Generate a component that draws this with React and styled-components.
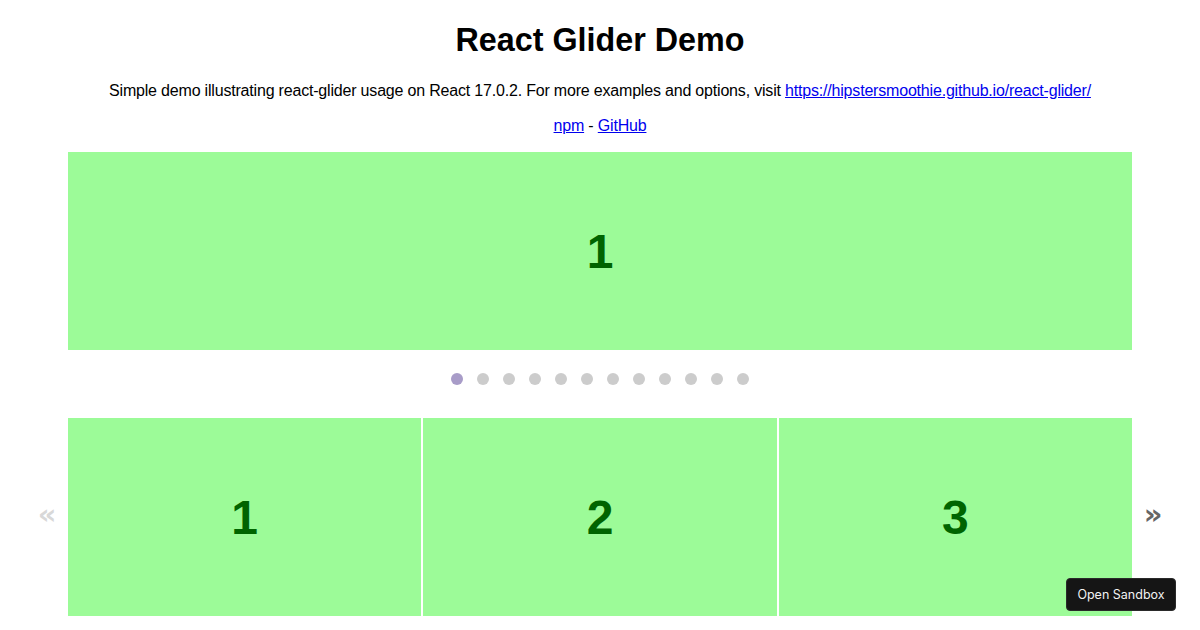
import React from "react";
import styled, { createGlobalStyle } from "styled-components";

const Global = createGlobalStyle`
  html, body { margin: 0; padding: 0; background: #fff; }
  body { font-family: "Liberation Sans", Arial, sans-serif; color: #000; }
  * { box-sizing: border-box; }
`;

const Page = styled.div`
  display: flex;
  flex-direction: column;
  align-items: center;
  padding-top: 22px;
`;

const Title = styled.h1`
  margin: 0;
  font-size: 32.3px;
  line-height: 37px;
  font-weight: bold;
`;

const Para = styled.p`
  margin: ${(p) => p.$top}px 0 0;
  font-size: 16px;
  line-height: 18px;
  letter-spacing: -0.19px;
  text-align: center;
`;

const Link = styled.a`
  color: #0000ee;
  text-decoration: underline;
`;

const Row = styled.div`
  display: flex;
  align-items: center;
  width: 1146px;
  margin-top: ${(p) => p.$top}px;
`;

const ArrowBox = styled.div`
  flex: 0 0 40px;
  display: flex;
  justify-content: center;
  align-items: center;
`;

const Arrow = styled.button`
  border: 0;
  background: none;
  padding: 0 0 6px;
  font-family: "DejaVu Sans", sans-serif;
  font-weight: bold;
  font-size: 29px;
  line-height: 1;
  color: #666;
  opacity: ${(p) => (p.$disabled ? 0.25 : 1)};
  cursor: pointer;
`;

const Track = styled.div`
  flex: 0 0 1066px;
  width: 1066px;
  display: flex;
  overflow: hidden;
`;

const Slide = styled.div`
  flex: 0 0 ${(p) => 100 / p.$per}%;
  padding: 1px;
`;

const SlideInner = styled.div`
  height: 198px;
  background: #9cfb98;
  color: #006400;
  display: flex;
  align-items: center;
  justify-content: center;
  font-size: 48px;
  font-weight: bold;
`;

const Dots = styled.div`
  display: flex;
  justify-content: center;
  margin-top: 15px;
`;

const Dot = styled.button`
  border: 0;
  padding: 0;
  width: 12px;
  height: 12px;
  margin: 7px;
  border-radius: 999px;
  background: ${(p) => (p.$active ? "#a89cc8" : "#ccc")};
  cursor: pointer;
`;

const SandboxButton = styled.a`
  position: fixed;
  right: 24px;
  bottom: 19px;
  width: 110px;
  height: 33px;
  display: flex;
  align-items: center;
  justify-content: center;
  background: #151515;
  color: #f2f2f2;
  border-radius: 4px;
  border: 1px solid #2a2a2a;
  font-family: Inter, "Liberation Sans", sans-serif;
  font-size: 12.5px;
  text-decoration: none;
`;

const pages = Array.from({ length: 12 }, (_, i) => i + 1);
const topVisible = [1];
const bottomVisible = [1, 2, 3];

export default function App() {
  return (
    <>
      <Global />
      <Page>
        <Title>React Glider Demo</Title>
        <Para $top={23}>
          Simple demo illustrating react-glider usage on React 17.0.2. For more
          examples and options, visit{" "}
          <Link href="#">https://hipstersmoothie.github.io/react-glider/</Link>
        </Para>
        <Para $top={17}>
          <Link href="#">npm</Link> - <Link href="#">GitHub</Link>
        </Para>

        <Row $top={16}>
          <ArrowBox />
          <Track>
            {topVisible.map((n) => (
              <Slide key={n} $per={1}>
                <SlideInner>{n}</SlideInner>
              </Slide>
            ))}
          </Track>
          <ArrowBox />
        </Row>
        <Dots>
          {pages.map((n) => (
            <Dot key={n} $active={n === 1} aria-label={`Page ${n}`} />
          ))}
        </Dots>

        <Row $top={25}>
          <ArrowBox>
            <Arrow $disabled aria-label="Previous">«</Arrow>
          </ArrowBox>
          <Track>
            {bottomVisible.map((n) => (
              <Slide key={n} $per={3}>
                <SlideInner>{n}</SlideInner>
              </Slide>
            ))}
          </Track>
          <ArrowBox>
            <Arrow aria-label="Next">»</Arrow>
          </ArrowBox>
        </Row>
      </Page>
      <SandboxButton href="#">Open Sandbox</SandboxButton>
    </>
  );
}
